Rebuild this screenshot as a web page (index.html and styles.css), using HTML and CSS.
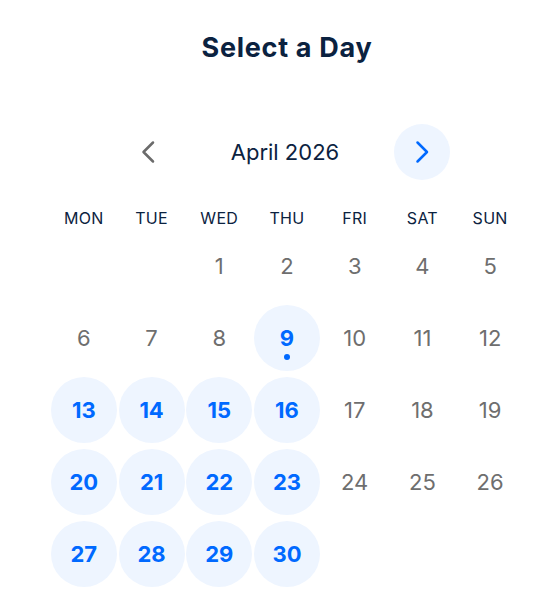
FILE: index.html
```html
<!DOCTYPE html>
<html lang="en">
<head>
<meta charset="utf-8">
<title>Select a Day</title>
<link rel="stylesheet" href="styles.css">
</head>
<body>
<main class="picker">
  <h1 class="title">Select a Day</h1>
  <div class="nav">
    <button class="nav-btn prev" aria-label="Previous month">
      <svg width="56" height="56" viewBox="0 0 56 56"><path d="M33 18.5 L23.5 28 L33 37.5" fill="none" stroke="currentColor" stroke-width="2.5" stroke-linecap="round" stroke-linejoin="round"/></svg>
    </button>
    <div class="month">April 2026</div>
    <button class="nav-btn next" aria-label="Next month">
      <svg width="56" height="56" viewBox="0 0 56 56"><path d="M23.5 18.5 L33 28 L23.5 37.5" fill="none" stroke="currentColor" stroke-width="2.5" stroke-linecap="round" stroke-linejoin="round"/></svg>
    </button>
  </div>
  <div class="weekdays">
    <div>MON</div><div>TUE</div><div>WED</div><div>THU</div><div>FRI</div><div>SAT</div><div>SUN</div>
  </div>
  <div class="days">
    <div class="cell"></div>
    <div class="cell"></div>
    <div class="cell"><span class="day">1</span></div>
    <div class="cell"><span class="day">2</span></div>
    <div class="cell"><span class="day">3</span></div>
    <div class="cell"><span class="day">4</span></div>
    <div class="cell"><span class="day">5</span></div>
    <div class="cell"><span class="day">6</span></div>
    <div class="cell"><span class="day">7</span></div>
    <div class="cell"><span class="day">8</span></div>
    <div class="cell"><span class="day avail today">9<i class="dot"></i></span></div>
    <div class="cell"><span class="day">10</span></div>
    <div class="cell"><span class="day">11</span></div>
    <div class="cell"><span class="day">12</span></div>
    <div class="cell"><span class="day avail">13</span></div>
    <div class="cell"><span class="day avail">14</span></div>
    <div class="cell"><span class="day avail">15</span></div>
    <div class="cell"><span class="day avail">16</span></div>
    <div class="cell"><span class="day">17</span></div>
    <div class="cell"><span class="day">18</span></div>
    <div class="cell"><span class="day">19</span></div>
    <div class="cell"><span class="day avail">20</span></div>
    <div class="cell"><span class="day avail">21</span></div>
    <div class="cell"><span class="day avail">22</span></div>
    <div class="cell"><span class="day avail">23</span></div>
    <div class="cell"><span class="day">24</span></div>
    <div class="cell"><span class="day">25</span></div>
    <div class="cell"><span class="day">26</span></div>
    <div class="cell"><span class="day avail">27</span></div>
    <div class="cell"><span class="day avail">28</span></div>
    <div class="cell"><span class="day avail">29</span></div>
    <div class="cell"><span class="day avail">30</span></div>
  </div>
</main>
</body>
</html>
```
FILE: styles.css
```css
* { box-sizing: border-box; }
html, body { margin: 0; background: #ffffff; }
body {
  font-family: "Inter", "Liberation Sans", sans-serif;
  color: #0b2240;
}
.picker {
  width: 474px;
  margin-left: 50px;
  padding-top: 32px;
}
.title {
  margin: 0;
  text-align: center;
  font-size: 27px;
  line-height: 32px;
  font-weight: 700;
  letter-spacing: 0.7px;
  color: #0b2240;
}
.nav {
  margin: 60px 0 0 70px;
  width: 330px;
  display: flex;
  align-items: center;
}
.nav-btn {
  width: 56px;
  height: 56px;
  border: 0;
  padding: 0;
  border-radius: 50%;
  background: transparent;
  display: flex;
  align-items: center;
  justify-content: center;
}
.nav-btn.prev { color: #6b6b6b; }
.nav-btn.next { color: #0069ff; background: #eef5ff; }
.month {
  flex: 1;
  text-align: center;
  font-size: 22px;
  line-height: 28px;
  color: #0b2240;
}
.weekdays {
  margin-top: 28px;
  display: grid;
  grid-template-columns: repeat(7, 1fr);
  font-size: 16px;
  line-height: 20px;
  letter-spacing: 0.3px;
  text-align: center;
  color: #0b2240;
}
.days {
  margin-top: 5px;
  display: grid;
  grid-template-columns: repeat(7, 1fr);
  row-gap: 6px;
}
.cell {
  height: 66px;
  display: flex;
  justify-content: center;
}
.day {
  position: relative;
  width: 66px;
  height: 66px;
  border-radius: 50%;
  display: flex;
  align-items: center;
  justify-content: center;
  font-size: 22px;
  color: #6e6e6e;
}
.day.avail {
  background: #eef5ff;
  color: #0069ff;
  font-weight: 700;
}
.dot {
  position: absolute;
  left: 50%;
  bottom: 11px;
  width: 6px;
  height: 6px;
  margin-left: -3px;
  border-radius: 50%;
  background: #0069ff;
}
```
